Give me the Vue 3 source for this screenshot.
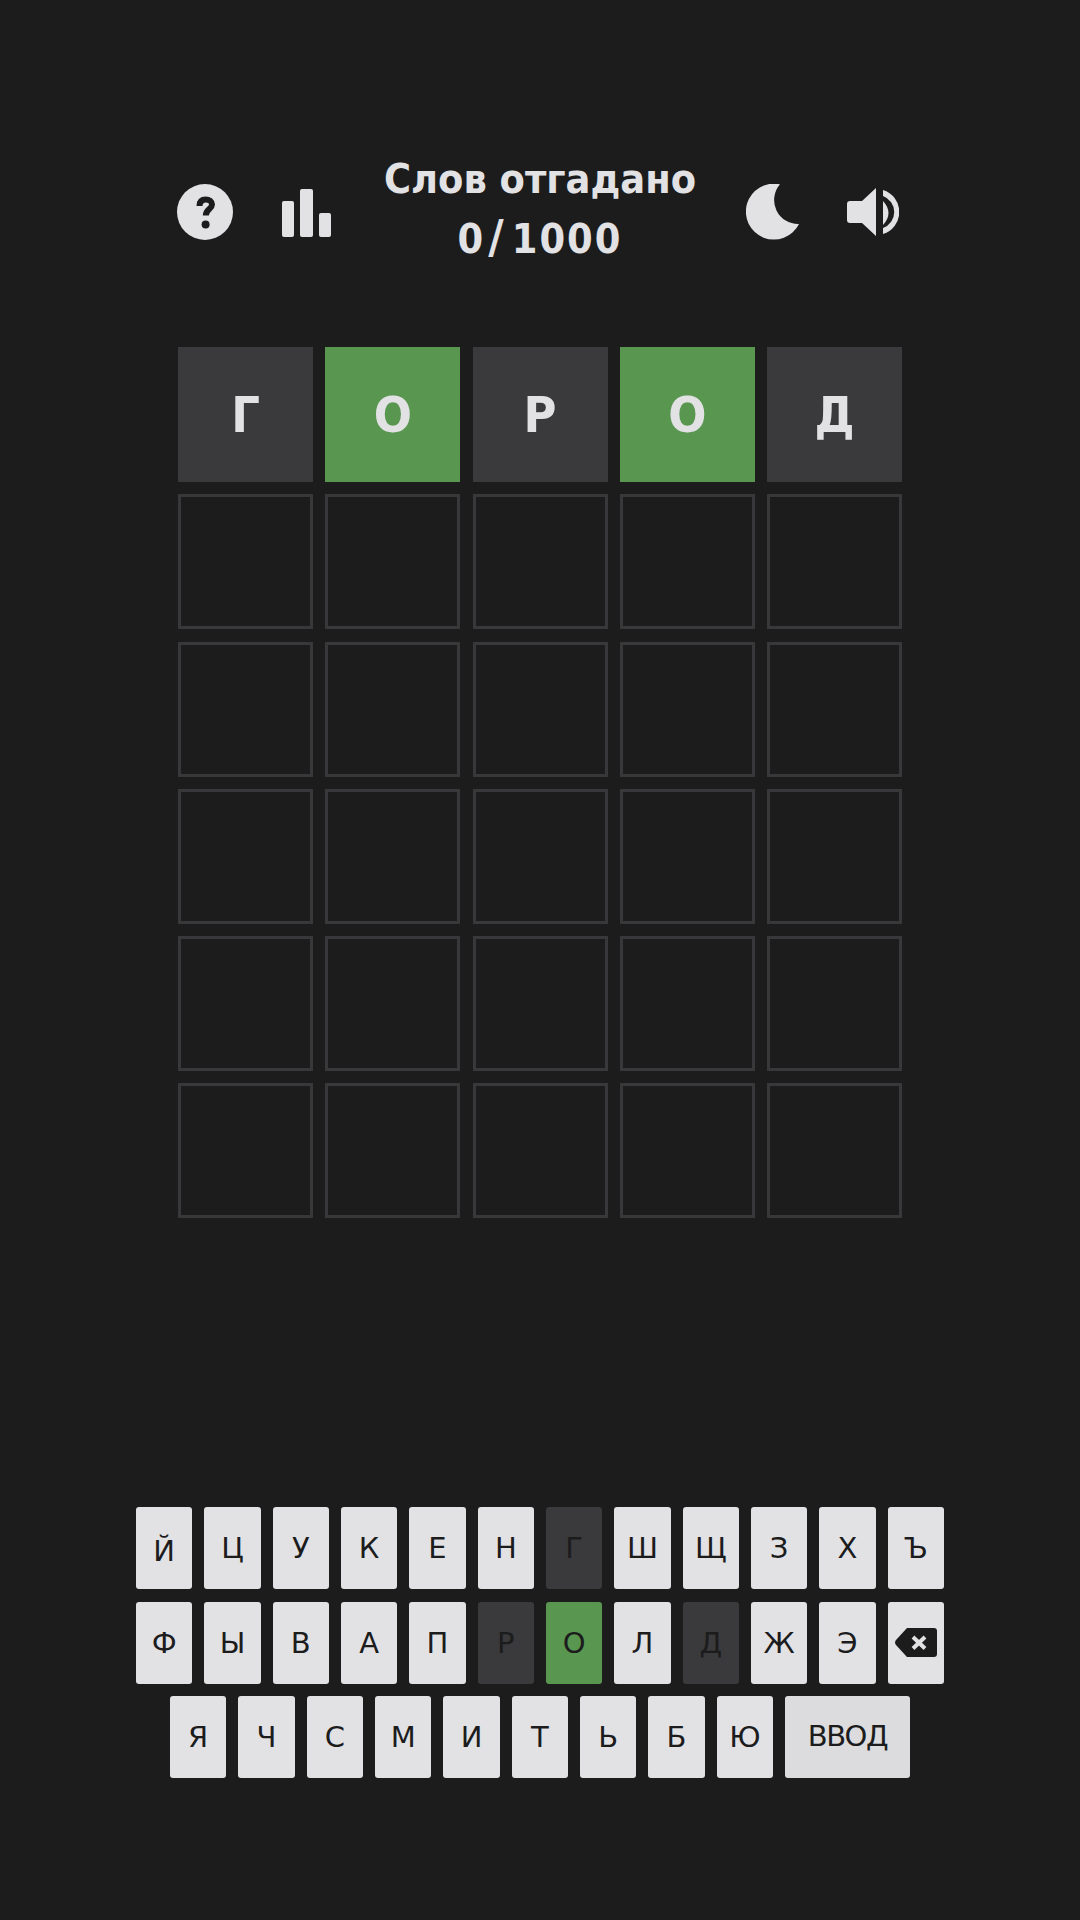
<script setup>
const guess = ['Г', 'О', 'Р', 'О', 'Д']
const guessStates = ['miss', 'hit', 'miss', 'hit', 'miss']
const emptyRows = 5

const row1 = ['Й', 'Ц', 'У', 'К', 'Е', 'Н', 'Г', 'Ш', 'Щ', 'З', 'Х', 'Ъ']
const row2 = ['Ф', 'Ы', 'В', 'А', 'П', 'Р', 'О', 'Л', 'Д', 'Ж', 'Э']
const row3 = ['Я', 'Ч', 'С', 'М', 'И', 'Т', 'Ь', 'Б', 'Ю']
const missed = ['Г', 'Р', 'Д']
const keyClass = (k) => ({
  miss: missed.includes(k),
  hit: k === 'О',
  low: k === 'Й',
})
</script>

<template>
  <main class="page">
    <header class="top">
      <div class="icons">
        <svg class="ic help" width="56" height="56" viewBox="0 0 56 56">
          <circle cx="28" cy="28" r="28" fill="#e2e2e5" />
          <path d="M22.5 22C22.5 16.5 26 15.5 28.8 15.5C32.2 15.5 35 17.6 35 20.6C35 25 28.8 25.4 28.8 31.5" fill="none" stroke="#1c1c1d" stroke-width="6" />
          <circle cx="28.6" cy="40.5" r="4" fill="#1c1c1d" />
        </svg>
        <svg class="ic bars" width="49" height="48" viewBox="0 0 49 48">
          <rect x="0" y="12" width="12" height="36" rx="2" fill="#e2e2e5" />
          <rect x="18" y="0" width="13" height="48" rx="2" fill="#e2e2e5" />
          <rect x="37" y="24" width="12" height="24" rx="2" fill="#e2e2e5" />
        </svg>
      </div>
      <h1 class="title">Слов отгадано<br /><span class="score">0<span class="slash">/</span>1000</span></h1>
      <div class="icons">
        <svg class="ic moon" width="54" height="56" viewBox="0 0 54 56">
          <path d="M34 .3A28 28 0 1 0 53 40A24 24 0 0 1 34 .3Z" fill="#e2e2e5" />
        </svg>
        <svg class="ic sound" width="52" height="52" viewBox="0 0 52 52">
          <path d="M3 15H15L29 2V50L15 37H3Q0 37 0 34V18Q0 15 3 15Z" fill="#e2e2e5" />
          <path d="M36 15Q47 27 36 39Z" fill="#e2e2e5" />
          <path d="M36 4A23 23 0 0 1 36 48V42A17 17 0 0 0 36 10Z" fill="#e2e2e5" />
        </svg>
      </div>
    </header>

    <section class="board">
      <div v-for="(l, i) in guess" :key="'g' + i" class="cell" :class="guessStates[i]">{{ l }}</div>
      <div v-for="n in emptyRows * 5" :key="n" class="cell empty"></div>
    </section>

    <section class="keyboard">
      <div class="krow">
        <button v-for="k in row1" :key="k" class="key" :class="keyClass(k)">{{ k }}</button>
      </div>
      <div class="krow">
        <button v-for="k in row2" :key="k" class="key" :class="keyClass(k)">{{ k }}</button>
        <button class="key">
          <svg width="42" height="29" viewBox="0 0 42 29">
            <path d="M12 0H39Q42 0 42 3V26Q42 29 39 29H12L1 17Q-1 14.500 1 12Z" fill="#1c1c1d" />
            <path d="M18 9L30 20.500M30 9L18 20.500" stroke="#e2e2e5" stroke-width="4" fill="none" />
          </svg>
        </button>
      </div>
      <div class="krow short">
        <button v-for="k in row3" :key="k" class="key" :class="keyClass(k)">{{ k }}</button>
        <button class="key enter">ВВОД</button>
      </div>
    </section>
  </main>
</template>

<style>
html, body { margin: 0; background: #1c1c1d; }
</style>

<style scoped>
.page {
  width: 1080px;
  height: 1920px;
  background: #1c1c1d;
  color: #e2e2e5;
  font-family: "DejaVu Sans Condensed", "DejaVu Sans", sans-serif;
  display: flex;
  flex-direction: column;
  align-items: center;
  box-sizing: border-box;
  padding-top: 150px;
}
.top {
  width: 724px;
  height: 124px;
  display: flex;
  justify-content: space-between;
  align-items: center;
}
.icons {
  width: 155px;
  display: flex;
  justify-content: space-between;
  align-items: center;
}
.ic { display: block; flex: none; }
.help { margin-left: -1px; }
.bars { margin-top: 2px; margin-right: 2px; }
.moon { margin-left: -1px; }
.sound { margin-right: 3px; }
.title {
  margin: 0 0 6px;
  font-size: 41px;
  line-height: 60px;
  font-weight: 700;
  text-align: center;
  white-space: nowrap;
}
.score { letter-spacing: 2px; }
.slash {
  font-size: 47px;
  line-height: 0;
  padding-left: 3px;
  padding-right: 6px;
}
.board {
  margin-top: 73px;
  width: 724px;
  display: grid;
  grid-template-columns: repeat(5, 135px);
  grid-auto-rows: 135px;
  gap: 12.250px;
}
.cell {
  box-sizing: border-box;
  display: flex;
  align-items: center;
  justify-content: center;
  font-size: 50px;
  font-weight: 700;
  color: #e2e2e5;
}
.cell.miss { background: #3a3a3c; }
.cell.hit { background: #599650; }
.cell.empty { border: 3px solid #38383a; }
.keyboard {
  margin-top: 289px;
  width: 808px;
  display: flex;
  flex-direction: column;
  gap: 12.500px;
}
.krow {
  display: grid;
  grid-template-columns: repeat(12, 1fr);
  gap: 12px;
}
.krow.short {
  width: 740px;
  margin: 0 auto;
  grid-template-columns: repeat(9, 56.330px) 1fr;
}
.key {
  height: 82px;
  padding: 0;
  border: 0;
  border-radius: 3px;
  background: #e2e2e5;
  color: #1c1c1d;
  font-family: "DejaVu Sans", sans-serif;
  font-size: 29px;
  display: flex;
  align-items: center;
  justify-content: center;
}
.key.miss { background: #3a3a3c; }
.key.hit { background: #599650; }
.key.low { padding-top: 6px; }
.key.enter {
  background: #dcdcdf;
  padding-bottom: 3px;
  letter-spacing: -1.500px;
}
</style>
